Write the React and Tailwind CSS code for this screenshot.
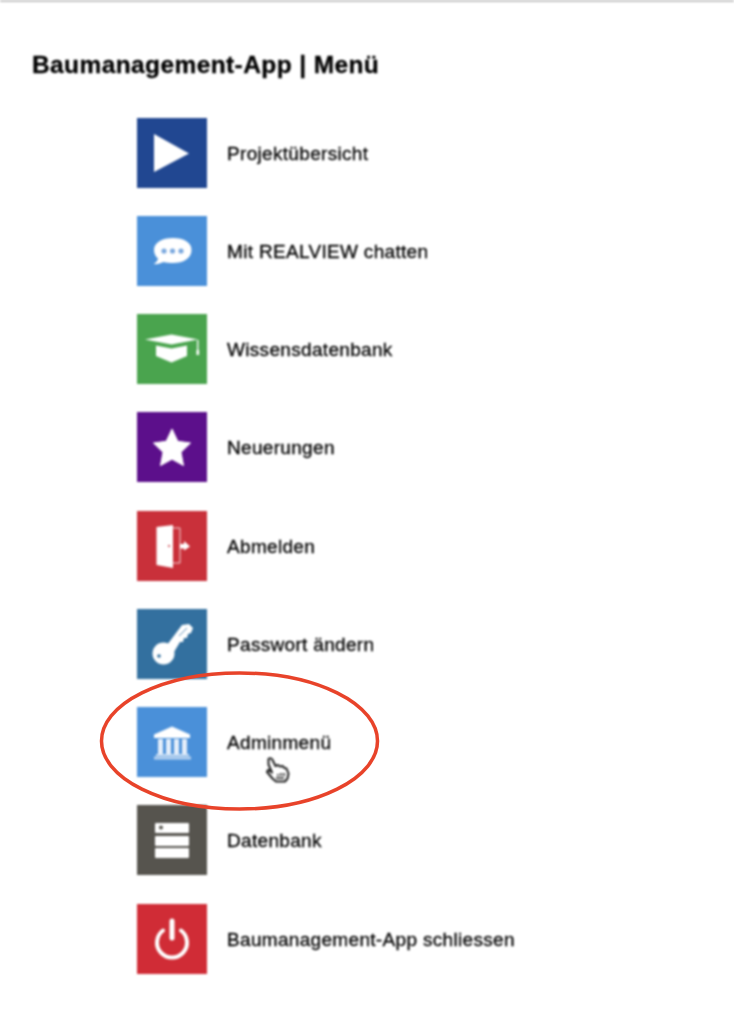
const sans = { fontFamily: '"Liberation Sans", Arial, sans-serif' };

const Play = () => (
  <svg viewBox="0 0 70 70" className="w-full h-full"><polygon points="17,16 52,35.500 17,54" fill="#fff" /></svg>
);
const Chat = () => (
  <svg viewBox="0 0 70 70" className="w-full h-full">
    <path d="M36 22c-11 0-19 4.500-19 12 0 3.500 1.500 6.500 4 8.500-.5 2.500-2 4.500-4.500 5.500 3.500.5 7-.5 10-2 3 .8 6 1 9.500 1 11 0 18.500-5 18.500-13 0-7.500-7.500-12-18.500-12z" fill="#fff" />
    <circle cx="27" cy="35" r="2.600" fill="#7aa8de" /><circle cx="35.500" cy="35" r="2.600" fill="#7aa8de" /><circle cx="44" cy="35" r="2.600" fill="#7aa8de" />
  </svg>
);
const Grad = () => (
  <svg viewBox="0 0 70 70" className="w-full h-full" fill="#fff">
    <polygon points="8,25.500 34.500,20.500 61,25.500 34.500,30.500" />
    <path d="M19 31.500l15.500 3 15.500-3v10.500L34.500 48.500 19 42z" />
    <rect x="60" y="26" width="1.400" height="12" />
    <rect x="59.500" y="36" width="2.600" height="5" />
  </svg>
);
const Star = () => (
  <svg viewBox="0 0 70 70" className="w-full h-full">
    <polygon points="35,17 40.800,29.300 53.500,31 44,40.300 46.500,53.500 35,47.200 23.500,53.500 26,40.300 16.500,31 29.200,29.300" fill="#fff" stroke="#fff" strokeWidth="1" strokeLinejoin="round" />
  </svg>
);
const Door = () => (
  <svg viewBox="0 0 70 70" className="w-full h-full">
    <polygon points="19.500,16 36,14 36,57 19.500,54" fill="#fff" />
    <path d="M36 17h7v35h-7" fill="none" stroke="#fff" strokeWidth="1" opacity="0.8" />
    <circle cx="32" cy="35" r="1" fill="#c9303a" />
    <polygon points="43,33 47,33 47,30 53,35.500 47,39.500 47,37.500 43,37.500" fill="#fff" />
  </svg>
);
const KeyIcon = () => (
  <svg viewBox="0 0 70 70" className="w-full h-full">
    <path d="M30 36 L45 16 L52 15 L56 19 L54 24 L51 25 L50 29 L47 29 L46 33 L43 33 L37 43z" fill="#fff" />
    <circle cx="26.500" cy="44.500" r="11" fill="#fff" />
    <circle cx="22" cy="47" r="1.800" fill="#33709f" />
    <path d="M42 27 L50 19" stroke="#33709f" strokeWidth="0.800" />
  </svg>
);
const Bank = () => (
  <svg viewBox="0 0 70 70" className="w-full h-full" fill="#fff">
    <polygon points="35,19.500 53,27.500 53,31 17,31 17,27.500" />
    <rect x="21" y="32" width="5" height="15" opacity="0.85" />
    <rect x="29" y="32" width="5" height="15" opacity="0.85" />
    <rect x="37" y="32" width="5" height="15" opacity="0.85" />
    <rect x="45" y="32" width="5" height="15" opacity="0.85" />
    <rect x="19" y="47" width="33" height="2" opacity="0.7" />
    <rect x="17" y="49.500" width="37" height="3" opacity="0.6" />
  </svg>
);
const Server = () => (
  <svg viewBox="0 0 70 70" className="w-full h-full">
    <rect x="18" y="18" width="34" height="10" rx="1" fill="#fff" />
    <rect x="18" y="31" width="34" height="10" rx="1" fill="#fff" />
    <rect x="18" y="43" width="34" height="10" rx="1" fill="#fff" />
    <circle cx="24" cy="22.500" r="2" fill="#56544e" />
  </svg>
);
const Power = () => (
  <svg viewBox="0 0 70 70" className="w-full h-full" fill="none" stroke="#fff">
    <path d="M26 26.500a15 15 0 1 0 18 0" strokeWidth="4" strokeLinecap="round" />
    <path d="M35 17v17" strokeWidth="5" strokeLinecap="round" />
  </svg>
);

const items = [
  { label: "Projektübersicht", bg: "bg-[#214791]", Icon: Play },
  { label: "Mit REALVIEW chatten", bg: "bg-[#4a90d9]", Icon: Chat },
  { label: "Wissensdatenbank", bg: "bg-[#4aa44e]", Icon: Grad },
  { label: "Neuerungen", bg: "bg-[#5c0f8b]", Icon: Star },
  { label: "Abmelden", bg: "bg-[#c9303a]", Icon: Door },
  { label: "Passwort ändern", bg: "bg-[#33709f]", Icon: KeyIcon },
  { label: "Adminmenü", bg: "bg-[#4a90d9]", Icon: Bank },
  { label: "Datenbank", bg: "bg-[#56544e]", Icon: Server },
  { label: "Baumanagement-App schliessen", bg: "bg-[#d02c36]", Icon: Power },
];

export default function App() {
  return (
    <div className="relative w-[734px] h-[1032px] bg-white overflow-hidden" style={sans}>
      <div className="border-t-2 border-[#c4c4c4] blur-[0.8px]">
        <h1 className="pl-8 pt-[48px] text-[24.500px] tracking-[0.4px] leading-[30px] font-bold text-black [-webkit-text-stroke:0.3px_#000]">Baumanagement-App | Menü</h1>
        <ul className="pl-[137px] pt-[37.700px] flex flex-col gap-[28.250px]">
          {items.map(({ label, bg, Icon }) => (
            <li key={label} className="flex items-center gap-5">
              <div className={`w-[70px] h-[70px] shrink-0 ${bg}`}><Icon /></div>
              <span className="pt-[2px] text-[19px] tracking-[0.32px] leading-6 text-black [-webkit-text-stroke:0.3px_#000]">{label}</span>
            </li>
          ))}
        </ul>
      </div>
      <svg className="absolute left-[98px] top-[670px] w-[284px] h-[142px]" viewBox="0 0 284 142" fill="none">
        <ellipse cx="141.500" cy="71" rx="138" ry="68" stroke="#e8432a" strokeWidth="3.500" />
      </svg>
      <svg className="absolute left-[264px] top-[755px] w-[27px] h-[29px] blur-[0.8px]" viewBox="0 0 27 29" fill="#fff" stroke="#222" strokeWidth="2" strokeLinejoin="round">
        <path d="M4.500 4c1.500-1.500 3.500-.5 4 1l3 6 2.500-1 2 1.500 2.500-.5 2 2 2 .5 2 5-1 5-2.500 3H12l-3.500-3L3 17l1-2 3 1.500 1 1-3.500-8z" />
        <path d="M12 23h8M14 19v2M17 18v3M20 18v3" strokeWidth="1.500" />
      </svg>
    </div>
  );
}
